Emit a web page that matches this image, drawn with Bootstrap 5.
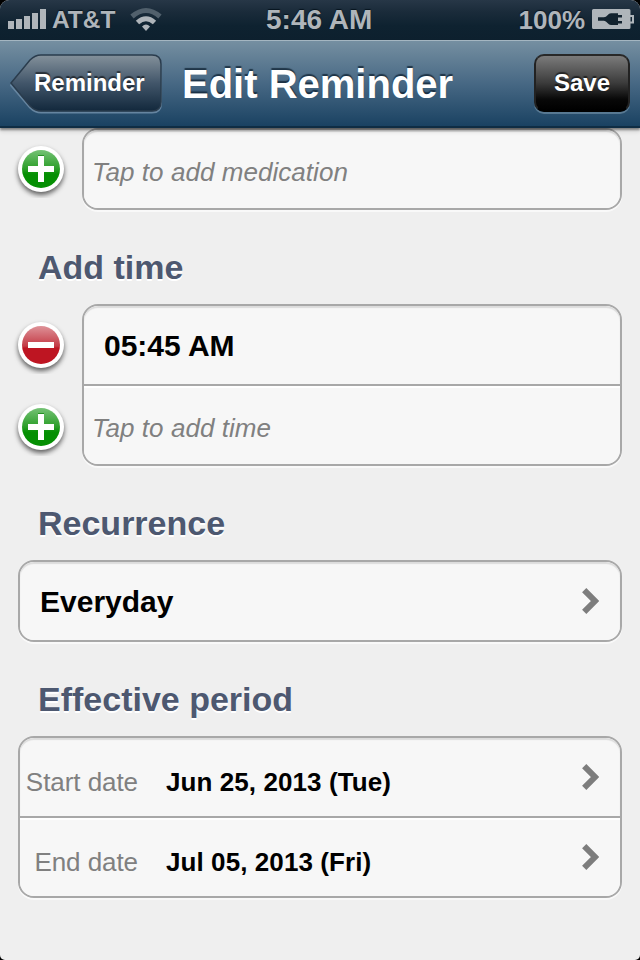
<!DOCTYPE html>
<html lang="en">
<head>
<meta charset="utf-8">
<meta name="viewport" content="width=device-width, initial-scale=1">
<title>Edit Reminder</title>
<link href="https://cdn.jsdelivr.net/npm/bootstrap@5.3.0/dist/css/bootstrap.min.css" rel="stylesheet">
<style>
body{background:#000;font-family:"Liberation Sans",Arial,sans-serif;color:#000}
.phone{width:640px;height:960px;background:#efefef;border-radius:9px 9px 5px 5px}
.statusbar{height:40px;background:linear-gradient(#273747 0,#1a2b3a 12px,#0e2230 26px,#0d202e);color:#afb5ba;font-weight:700;line-height:40px;text-shadow:0 -1px 1px #07141e}
.carrier{font-size:24.5px;width:65px;margin-left:5px;line-height:40px}
.wifi{margin-left:13px}
.clock{font-size:28px;margin-left:104px;width:108px;line-height:39px}
.percent{font-size:26px;margin-left:auto;margin-right:7px}
.battery{margin-right:6px}
.topbar{height:88px;background:linear-gradient(#758fa1,#476884 50%,#1a4262);border-top:1px solid #a4b6c1;border-bottom:2px solid #0f2d44;box-shadow:0 2px 2px rgba(0,0,0,.4),0 4px 4px rgba(0,0,0,.1);padding:13px 10px 0;position:relative;z-index:2}
.tap-btn{height:58px;font-size:24px;font-weight:700;line-height:55px;color:#fff;border:0;padding:0;text-shadow:0 -2px 1px rgba(0,0,0,.55);border-radius:10px}
.tap-btn:hover{color:#fff}
.back-btn{width:152px;padding:0 0 2px 24px;text-align:left}
.back-btn svg{left:0;top:0}
.back-btn span{position:relative}
.save-btn,.save-btn:hover{width:96px;background:linear-gradient(#7b7b7b,#3b3b3b 50%,#080808 80%,#000);border:2px solid;border-color:#282828 #222 #000;box-shadow:0 2px 0 rgba(120,150,172,.6);line-height:51px;padding-bottom:2px}
.page-title{font-size:40px;font-weight:700;line-height:60px;color:#fff;margin:0 0 0 20px;text-shadow:0 -2px 1px rgba(14,32,48,.75)}
.section-title{font-size:34px;font-weight:700;line-height:74px;padding:20px 0 0 38px;margin:0;color:#4d5870;text-shadow:0 2px 0 #fff}
.gutter{width:82px;flex:none}
.gutter>div{height:82px;padding-left:12px}
.gutter-tall{height:162px}
.wide-group{margin-left:18px}
.field-group{border:2px solid #a8a8a8;border-radius:16px;background:#f7f7f7;overflow:hidden;margin-right:18px;box-shadow:0 2px 0 #f9f9f9}
.field,.field.list-group-item:first-child{height:78px;border:0;border-radius:14px 14px 0 0;padding:0;background:#f7f7f7;color:#000;box-shadow:inset 0 2px 1px #dcdcdc}
.field+.field{height:80px;border-top:2px solid #a8a8a8;border-radius:0;box-shadow:inset 0 2px 0 #fff}
.hint{font-size:26px;font-style:italic;color:#808080;line-height:78px;padding:3px 0 0 8px;letter-spacing:.05px}
.big{font-size:30px;font-weight:700;line-height:78px;padding:1px 0 0 20px}
.date-label{font-size:26px;color:#808080;width:118px;text-align:right;padding-top:11px;line-height:69px;letter-spacing:-.06px}
.date-value{font-size:26px;font-weight:700;padding:11px 0 0 28px;line-height:69px;letter-spacing:.08px}
.chev{margin-left:auto;margin-right:20px}
</style>
<script src="https://cdn.jsdelivr.net/npm/bootstrap@5.3.0/dist/js/bootstrap.bundle.min.js"></script>
</head>
<body>
<svg width="0" height="0" class="position-absolute" aria-hidden="true">
<defs>
<linearGradient id="green" x2="0" y2="1"><stop stop-color="#75c275"/><stop offset=".5" stop-color="#2b9e28"/><stop offset=".6" stop-color="#0c930a"/><stop offset=".65" stop-color="#058f03"/></linearGradient>
<linearGradient id="red" x2="0" y2="1"><stop stop-color="#de9298"/><stop offset=".53" stop-color="#c43a45"/><stop offset=".58" stop-color="#be1522"/></linearGradient>
<linearGradient id="backfill" x2="0" y2="1"><stop stop-color="#84919b"/><stop offset=".5" stop-color="#42566a"/><stop offset="1" stop-color="#12283c"/></linearGradient>
<filter id="drop" x="-30%" y="-30%" width="160%" height="170%" color-interpolation-filters="sRGB"><feDropShadow dx="0" dy="3" stdDeviation="2.5" flood-opacity=".6"/></filter>
<symbol id="add" viewBox="0 0 58 58"><circle cx="29" cy="29" r="23" fill="#fff" filter="url(#drop)"/><circle cx="29" cy="29" r="19" fill="url(#green)"/><path d="M26 15h6v11h10v6H32v10h-6V32H16v-6h10z" fill="#087b08" opacity=".65"/><path d="M26 16h6v10h10v6H32v10h-6V32H16v-6h10z" fill="#fff"/></symbol>
<symbol id="remove" viewBox="0 0 58 58"><circle cx="29" cy="29" r="23" fill="#fff" filter="url(#drop)"/><circle cx="29" cy="29" r="19" fill="url(#red)"/><path d="M16 26h26v6H16z" fill="#fff"/></symbol>
<symbol id="chevron" viewBox="0 0 18 26"><path d="M2.200 2.200 13 13 2.200 23.800" fill="none" stroke="#7d7d7d" stroke-width="6"/></symbol>
</defs>
</svg>
<div class="phone overflow-hidden">
<div class="statusbar d-flex align-items-start">
<svg width="39" height="40" class="ms-2 flex-shrink-0" fill="#afb5ba"><path d="M0 21h6v8H0zM8 19h6v10H8zM16 16h6v13h-6zM24 13h6v16h-6zM32 9h6v20h-6z"/></svg>
<span class="carrier flex-shrink-0">AT&amp;T</span>
<svg width="32" height="40" class="wifi flex-shrink-0" fill="none" stroke-width="5"><path d="M2 16.500Q16 4.500 30 16.500" stroke="#51606c"/><path d="M7.500 22.500Q16 15 24.500 22.500" stroke="#afb5ba"/><path d="M12 26.500Q16 22.500 20 26.500L16 31z" fill="#afb5ba"/></svg>
<span class="clock flex-shrink-0">5:46 AM</span>
<span class="percent">100%</span>
<svg width="42" height="40" class="battery flex-shrink-0"><path d="M1.500 9h35.500q1.500 0 1.500 1.500V15h4v8.500h-4v4q0 1.500-1.500 1.500H1.500Q0 29 0 27.500v-17Q0 9 1.500 9zM38.500 17v4.500H40V17z" fill="#afb5ba" fill-rule="evenodd"/><path d="M6 17.200h6q2 0 3.500-2t3.500-2h7V15h4v2.500h-4v3.500h4v2.500h-4V25h-7q-2 0-3.500-2T12 20.800H6z" fill="#13232f"/></svg>
</div>
<nav class="topbar d-flex align-items-start">
<button type="button" class="btn tap-btn back-btn position-relative">
<svg class="position-absolute" width="152" height="60" fill="none"><path d="M1 30Q11 18 20 7 25 1 31 1H142Q151 1 151 10V48Q151 57 142 57H31Q25 57 20 52z" transform="translate(0 1.500)" stroke="#6685a0" stroke-width="2"/><path d="M1 29Q11 17 20 6 25 1 31 1H142Q151 1 151 10V48Q151 57 142 57H31Q25 57 20 52z" fill="url(#backfill)" stroke="#2a3c4d" stroke-width="1.500"/></svg>
<span>Reminder</span></button>
<h1 class="page-title">Edit Reminder</h1>
<button type="button" class="btn tap-btn save-btn ms-auto">Save</button>
</nav>
<main>
<div class="d-flex">
<div class="gutter"><div class="d-flex align-items-center"><svg width="58" height="58"><use href="#add"/></svg></div></div>
<div class="field-group list-group flex-grow-1"><div class="field list-group-item"><div class="hint">Tap to add medication</div></div></div>
</div>
<h2 class="section-title">Add time</h2>
<div class="d-flex">
<div class="gutter gutter-tall"><div class="d-flex align-items-center"><svg width="58" height="58"><use href="#remove"/></svg></div><div class="d-flex align-items-center"><svg width="58" height="58"><use href="#add"/></svg></div></div>
<div class="field-group list-group flex-grow-1"><div class="field list-group-item"><div class="big">05:45 AM</div></div><div class="field list-group-item"><div class="hint">Tap to add time</div></div></div>
</div>
<h2 class="section-title">Recurrence</h2>
<div class="field-group wide-group list-group">
<div class="field list-group-item d-flex align-items-start"><div class="big">Everyday</div><svg class="chev align-self-center" width="18" height="26"><use href="#chevron"/></svg></div>
</div>
<h2 class="section-title">Effective period</h2>
<div class="field-group wide-group list-group">
<div class="field list-group-item d-flex align-items-center"><span class="date-label">Start date</span><span class="date-value">Jun 25, 2013 (Tue)</span><svg class="chev" width="18" height="26"><use href="#chevron"/></svg></div>
<div class="field list-group-item d-flex align-items-center"><span class="date-label">End date</span><span class="date-value">Jul 05, 2013 (Fri)</span><svg class="chev" width="18" height="26"><use href="#chevron"/></svg></div>
</div>
</main>
</div>
</body>
</html>
